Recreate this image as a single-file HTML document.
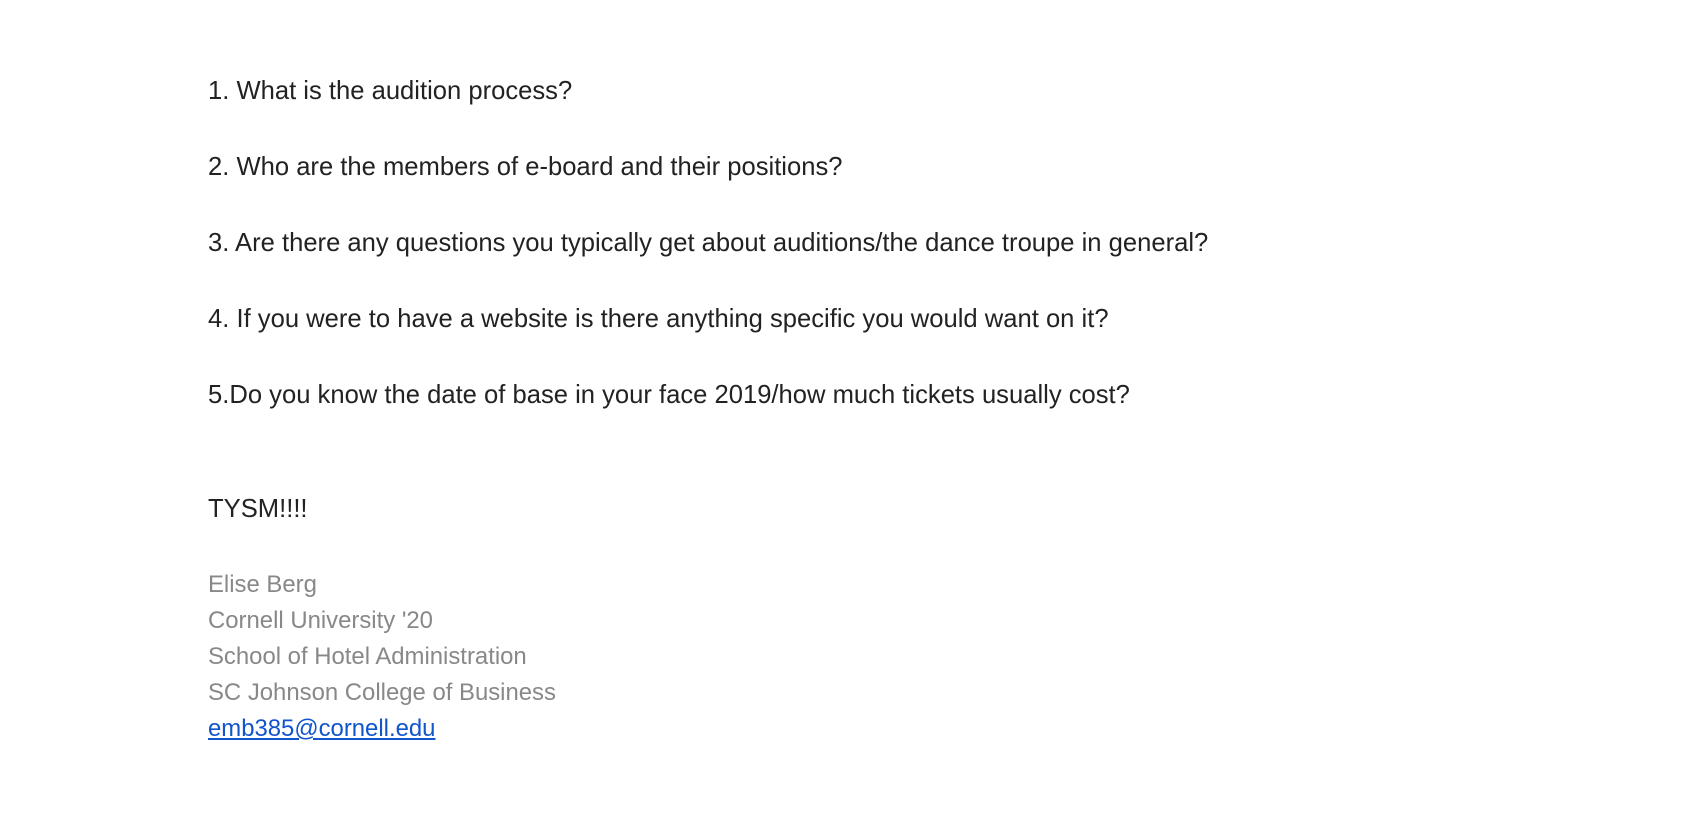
<!DOCTYPE html>
<html><head><style>
body{margin:0;width:1708px;height:840px;background:#fff;font-family:"Liberation Sans",Arial,sans-serif;position:relative;overflow:hidden}
div{position:absolute;left:208px;font-size:25.6px;line-height:25.6px;white-space:nowrap;color:#222}
.g{color:#888;font-size:23.9px;line-height:24px}
a{color:#1155cc;text-decoration:underline}
</style></head><body>
<div style="top:79px">1. What is the audition process?</div>
<div style="top:155px">2. Who are the members of e-board and their positions?</div>
<div style="top:231px">3. Are there any questions you typically get about auditions/the dance troupe in general?</div>
<div style="top:307px">4. If you were to have a website is there anything specific you would want on it?</div>
<div style="top:383px">5.Do you know the date of base in your face 2019/how much tickets usually cost?</div>
<div style="top:497px">TYSM!!!!</div>
<div class="g" style="top:573px">Elise Berg</div>
<div class="g" style="top:609px">Cornell University '20</div>
<div class="g" style="top:645px">School of Hotel Administration</div>
<div class="g" style="top:681px">SC Johnson College of Business</div>
<div class="g" style="top:717px"><a>emb385@cornell.edu</a></div>
</body></html>
